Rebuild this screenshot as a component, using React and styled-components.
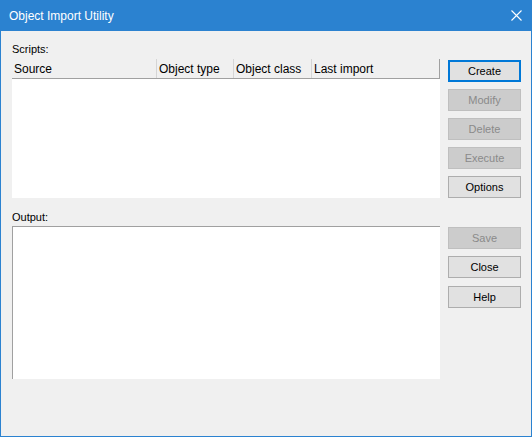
import React from 'react';
import styled, { createGlobalStyle } from 'styled-components';

const GlobalStyle = createGlobalStyle`
  html, body {
    margin: 0;
    padding: 0;
    background: #ffffff;
  }
  body {
    font-family: "Liberation Sans", Arial, sans-serif;
  }
`

const Window = styled.div`
  box-sizing: border-box;
  width: 532px;
  height: 437px;
  border: 1px solid #2b82d0;
  border-top: none;
  background: #f0f0f0;
  display: flex;
  flex-direction: column;
`

const TitleBar = styled.div`
  height: 31px;
  background: #2b82d0;
  display: flex;
  align-items: center;
  justify-content: space-between;
  padding: 0 9px 0 8px;
  color: #ffffff;
  font-size: 12px;
  flex-shrink: 0;
`

const CloseIcon = () => (
  <svg width="11" height="11" viewBox="0 0 11 11">
    <path d="M0.5 0.5 L10.5 10.5 M10.5 0.5 L0.5 10.5" stroke="#ffffff" strokeWidth="1.1" />
  </svg>
)

const Body = styled.div`
  padding: 12px 10px 0 11px;
  display: flex;
  flex-direction: column;
  gap: 13px;
`

const Section = styled.div`
  display: flex;
  align-items: flex-start;
  gap: 8px;
`

const LeftCol = styled.div`
  width: 428px;
  display: flex;
  flex-direction: column;
`

const Label = styled.div`
  font-size: 11px;
  color: #000000;
  height: ${props => props.h || 16}px;
  line-height: 11px;
  padding-top: 1px;
  box-sizing: border-box;
`

const ListView = styled.div`
  height: 139px;
  background: #ffffff;
  display: flex;
  flex-direction: column;
`

const Header = styled.div`
  display: flex;
  height: 20px;
  box-sizing: border-box;
  border-bottom: 1px solid #a0a0a0;
  background: #f0f0f0;
`

const HeaderCell = styled.div`
  box-sizing: border-box;
  width: ${props => props.w}px;
  flex: ${props => (props.w ? 'none' : '1')};
  padding: 1px 0 0 2px;
  border-right: 1px solid ${props => (props.last ? '#a0a0a0' : '#d5d5d5')};
  font-size: 12px;
  line-height: 19px;
  color: #000000;
  white-space: nowrap;
  overflow: hidden;
`

const OutputBox = styled.div`
  height: 153px;
  box-sizing: border-box;
  background: #ffffff;
  border-top: 1px solid #a0a0a0;
  border-left: 1px solid #a0a0a0;
`

const ButtonCol = styled.div`
  display: flex;
  flex-direction: column;
  padding-top: ${props => props.top}px;
  gap: 7px;
`

const Button = styled.div`
  box-sizing: border-box;
  width: 73px;
  height: 22px;
  margin-top: ${props => props.extra || 0}px;
  background: ${props => (props.disabled ? '#cccccc' : '#e1e1e1')};
  border: ${props => (props.primary ? '2px solid #0078d7' : props.disabled ? '1px solid #bfbfbf' : '1px solid #adadad')};
  color: ${props => (props.disabled ? '#8a8a8a' : '#000000')};
  font-size: 11px;
  display: flex;
  align-items: center;
  justify-content: center;
`

function App() {
  return (
    <>
      <GlobalStyle />
      <Window>
        <TitleBar>
          <span>Object Import Utility</span>
          <CloseIcon />
        </TitleBar>
        <Body>
          <Section>
            <LeftCol>
              <Label>Scripts:</Label>
              <ListView>
                <Header>
                  <HeaderCell w={145}>Source</HeaderCell>
                  <HeaderCell w={77}>Object type</HeaderCell>
                  <HeaderCell w={78}>Object class</HeaderCell>
                  <HeaderCell last>Last import</HeaderCell>
                </Header>
              </ListView>
            </LeftCol>
            <ButtonCol top={17}>
              <Button primary>Create</Button>
              <Button disabled>Modify</Button>
              <Button disabled>Delete</Button>
              <Button disabled>Execute</Button>
              <Button>Options</Button>
            </ButtonCol>
          </Section>
          <Section>
            <LeftCol>
              <Label h={15}>Output:</Label>
              <OutputBox />
            </LeftCol>
            <ButtonCol top={16}>
              <Button disabled>Save</Button>
              <Button>Close</Button>
              <Button extra={1}>Help</Button>
            </ButtonCol>
          </Section>
        </Body>
      </Window>
    </>
  );
}

export default App;
